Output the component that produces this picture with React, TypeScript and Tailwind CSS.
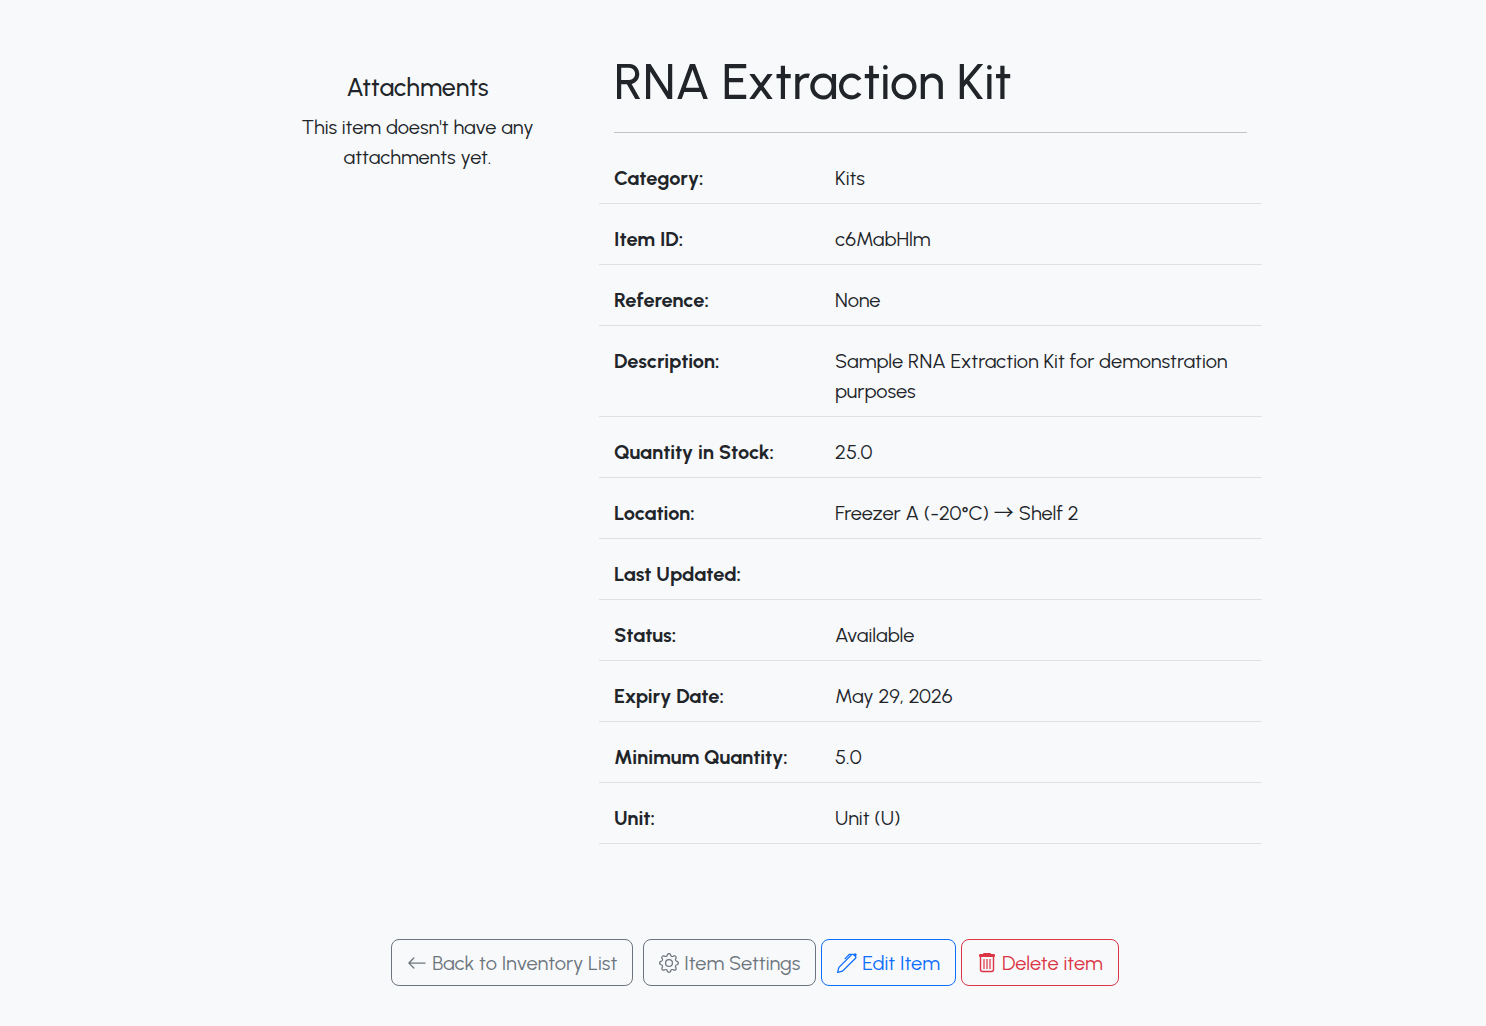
import { BsArrowLeft, BsGear, BsPen } from "react-icons/bs";
import type { ReactNode } from "react";

interface DetailRowProps {
    label: string;
    value: ReactNode;
}

const details: DetailRowProps[] = [
    { label: "Category:", value: "Kits" },
    { label: "Item ID:", value: "c6MabHlm" },
    { label: "Reference:", value: "None" },
    { label: "Description:", value: "Sample RNA Extraction Kit for demonstration purposes" },
    { label: "Quantity in Stock:", value: "25.0" },
    {
        label: "Location:",
        value: (
            <>
                Freezer A (-20°C) <span className="font-['Noto_Sans_CJK_JP',sans-serif] leading-none">→</span> Shelf 2
            </>
        ),
    },
    { label: "Last Updated:", value: "" },
    { label: "Status:", value: "Available" },
    { label: "Expiry Date:", value: "May 29, 2026" },
    { label: "Minimum Quantity:", value: "5.0" },
    { label: "Unit:", value: "Unit (U)" },
];

function DetailRow({ label, value }: DetailRowProps) {
    return (
        <div className="flex border-b border-[#dee2e6] pt-5 pb-2.5">
            <dt className="w-1/3 shrink-0 px-[15px] font-bold">{label}</dt>
            <dd className="grow px-[15px]">{value}</dd>
        </div>
    );
}

function TrashIcon() {
    return (
        <svg viewBox="0 0 20 20" className="h-5 w-5" fill="none" stroke="currentColor">
            <path
                d="M7 0h6a1 1 0 0 1 1 1h3a1 1 0 0 1 1 1v1a1 1 0 0 1-1 1H3a1 1 0 0 1-1-1V2a1 1 0 0 1 1-1h3a1 1 0 0 1 1-1z"
                fill="currentColor"
                stroke="none"
            />
            <path d="M3.5 4v12.5a2 2 0 0 0 2 2h9a2 2 0 0 0 2-2V4" strokeWidth="1.4" />
            <path d="M7 6v10M10 6v10M13 6v10" strokeWidth="1.2" />
        </svg>
    );
}

const buttonClass =
    "inline-flex items-center gap-[5px] rounded-lg border px-[15px] h-[47px]";

export default function App() {
    return (
        <div className="min-h-screen bg-[#f8f9fb] font-['Urbanist','Lato',sans-serif] text-xl leading-[30px] font-normal text-[#212529]">
            <main className="mx-auto max-w-[1038px] pt-[52px] pb-10">
                <div className="grid grid-cols-[375px_1fr]">
                    {/* Attachments */}
                    <aside className="pt-5 pr-5 pl-8 text-center">
                        <h5 className="mb-2.5 text-[25px] leading-[30px] font-medium">Attachments</h5>
                        <p>This item doesn't have any attachments yet.</p>
                    </aside>

                    {/* Item details */}
                    <section>
                        <div className="mb-2.5 px-[15px]">
                            <h1 className="mb-5 text-[50px] leading-[60px] font-medium">RNA Extraction Kit</h1>
                            <hr className="border-[#212529]/25" />
                        </div>
                        <dl>
                            {details.map((item) => (
                                <DetailRow key={item.label} label={item.label} value={item.value} />
                            ))}
                        </dl>
                    </section>
                </div>

                {/* Actions */}
                <div className="mt-[95px] flex justify-center gap-[5px] pl-6">
                    <a href="#inventory" className={`${buttonClass} mr-[5px] border-[#6c757d] text-[#6c757d]`}>
                        <BsArrowLeft />
                        Back to Inventory List
                    </a>
                    <a href="#settings" className={`${buttonClass} border-[#6c757d] text-[#6c757d]`}>
                        <BsGear />
                        Item Settings
                    </a>
                    <a href="#edit" className={`${buttonClass} border-[#0d6efd] text-[#0d6efd]`}>
                        <BsPen />
                        Edit Item
                    </a>
                    <button type="button" className={`${buttonClass} border-[#dc3545] text-[#dc3545]`}>
                        <TrashIcon />
                        Delete item
                    </button>
                </div>
            </main>
        </div>
    );
}
